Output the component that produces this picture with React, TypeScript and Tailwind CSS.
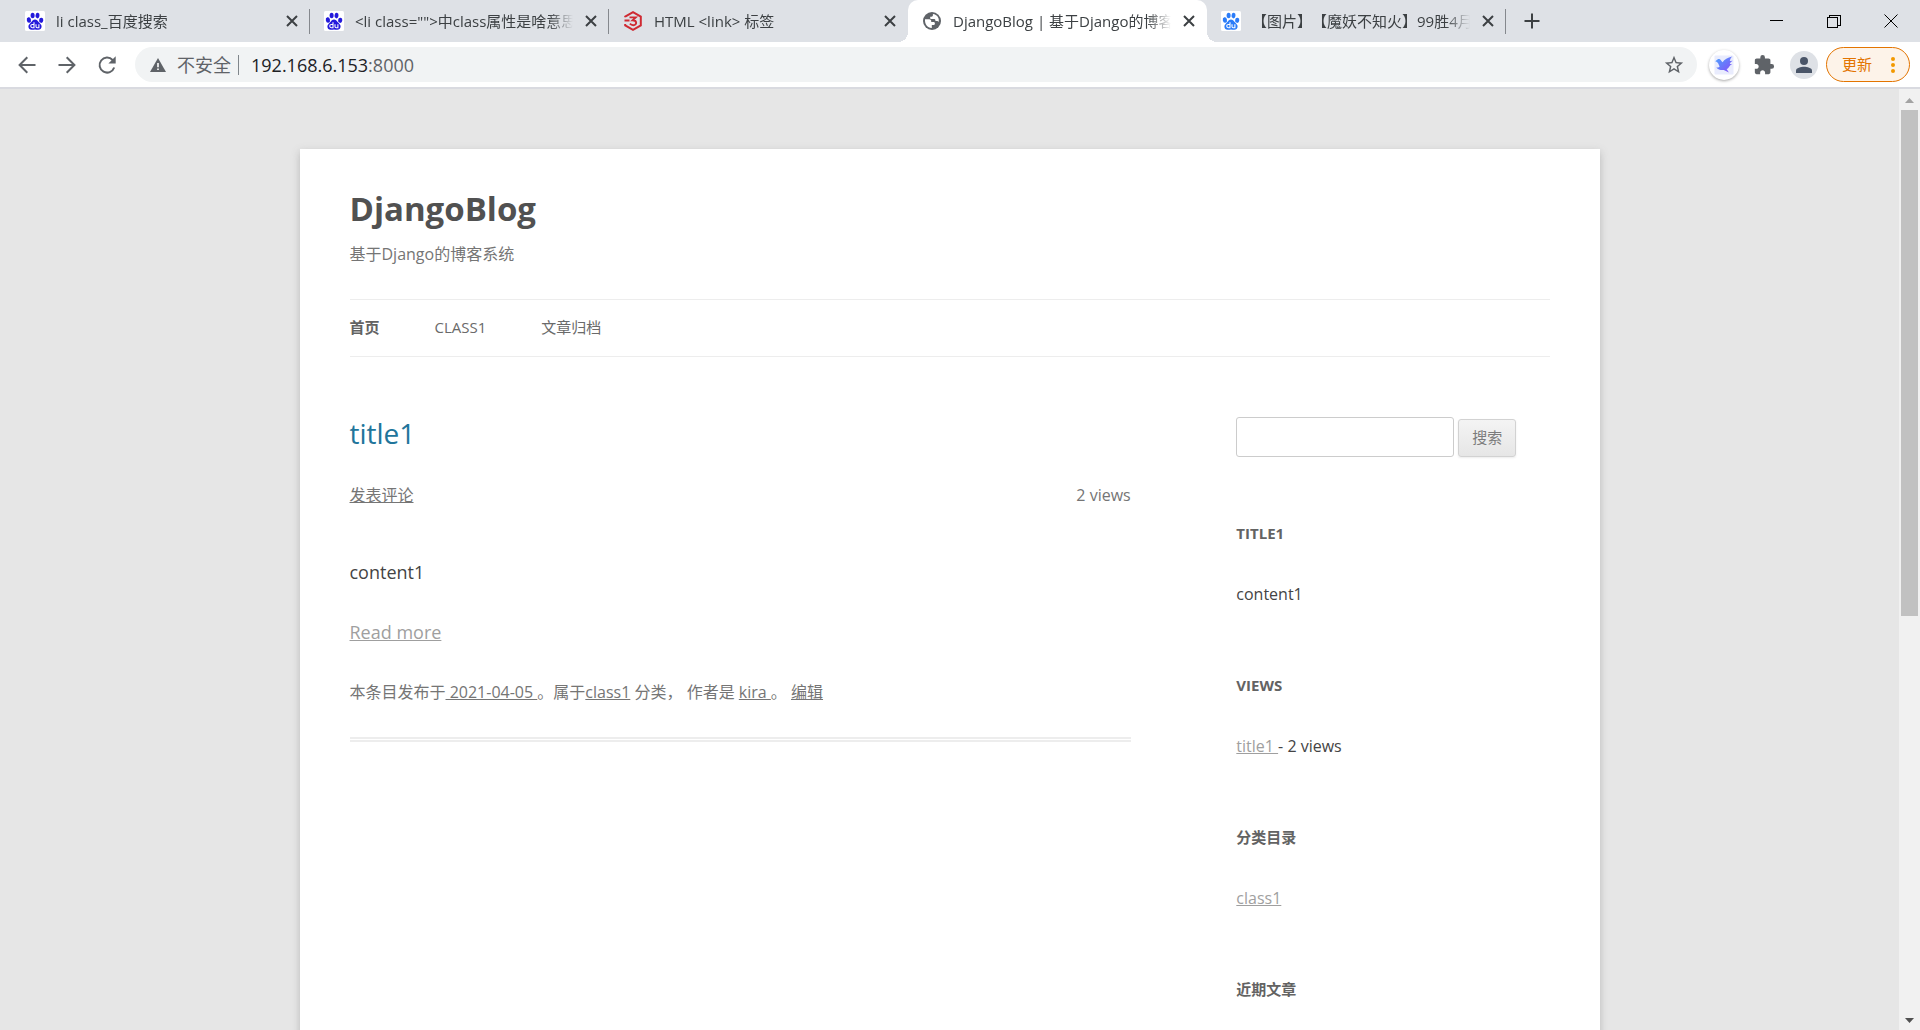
import type { ReactNode } from "react";

type IconProps = { className?: string };

function PawIcon({ color }: { color: string }) {
  return (
    <svg viewBox="0 0 20 20" className="size-5 shrink-0" aria-hidden="true">
      <rect width="20" height="20" rx="1.5" fill="#fff" />
      <g fill={color}>
        <ellipse cx="3.9" cy="9" rx="2.1" ry="2.7" transform="rotate(-12 3.9 9)" />
        <ellipse cx="7.6" cy="4.5" rx="2" ry="2.8" />
        <ellipse cx="12.5" cy="4.6" rx="2" ry="2.8" transform="rotate(10 12.5 4.6)" />
        <ellipse cx="16.2" cy="9.3" rx="2.1" ry="2.6" transform="rotate(8 16.2 9.3)" />
        <path d="M10 8.4c1.7 0 2.6 1.3 3.6 2.5 1.3 1.5 3.2 2.6 3 4.8-.2 2-1.7 3.1-3.6 3-1.2 0-2-.3-3-.3s-1.900.3-3.100.3c-2 .1-3.400-1-3.500-3-.1-2.200 1.700-3.300 3-4.800 1-1.200 1.900-2.500 3.600-2.500z" />
      </g>
      <g fill="none" stroke="#fff" strokeWidth="1.1">
        <path d="M9 11.300v5.400H7.300c-2.100 0-2.100-3.200 0-3.200H9" />
        <path d="M11 13.300v2.300c0 .8.400 1.100 1.100 1.100h1.800v-3.400" />
      </g>
    </svg>
  );
}

function HexIcon() {
  return (
    <svg viewBox="0 0 20 20" className="size-5 shrink-0" aria-hidden="true" fill="none" stroke="#cf2a33">
      <path d="M2.200 6.200V5.700L10 1.200l7.800 4.500v8.600L10 18.800l-7.800-4.500v-1.300" strokeWidth="2" />
      <path d="M1.500 9.500h5M6.500 6.400h6.200L9.600 9.200c4.800 0 4.400 5 .8 5-1.700 0-2.700-.6-3.500-1.500" strokeWidth="1.900" />
    </svg>
  );
}

function GlobeIcon() {
  return (
    <svg viewBox="0 0 20 20" className="size-5 shrink-0" aria-hidden="true">
      <circle cx="10" cy="10" r="9" fill="#5f6368" />
      <path
        d="M3 8.300h4.200c1.300 0 2 .8 2 1.800v1h2.200c1 0 1.500.6 1.500 1.400 0 1-.7 1.500-1.700 1.500H9.800v2.900C5.600 17 2.600 13.500 3 8.300z"
        fill="#fff"
      />
      <path
        d="M10.900 3v1.300c0 .9-.6 1.400-1.400 1.400H8.200v1.300c0 .7.400 1.100 1.100 1.100h2.600c1 0 1.500.6 1.500 1.400v.6h1.700c.8 0 1.300.400 1.500 1.100C17.700 7.300 15.200 3.500 10.900 3z"
        fill="#fff"
      />
    </svg>
  );
}

function CloseGlyph({ className }: IconProps) {
  return (
    <svg viewBox="0 0 12 12" className={className} aria-hidden="true" fill="none" stroke="#3c4043" strokeWidth="2">
      <path d="M1 1l10 10M11 1L1 11" />
    </svg>
  );
}

type TabProps = { icon: ReactNode; title: string; active?: boolean; divider?: boolean };

function Tab({ icon, title, active, divider }: TabProps) {
  return (
    <div
      className={
        active
          ? "relative flex h-full w-[299px] min-w-0 items-center rounded-t-[10px] bg-white pr-[12px] pl-[14px]"
          : "relative flex h-full w-[299px] min-w-0 items-center pr-[12px] pl-[14px]"
      }
    >
      {active && (
        <>
          <span className="absolute bottom-0 -left-[10px] size-[10px] bg-[radial-gradient(circle_at_0_0,transparent_10px,#fff_10px)]" />
          <span className="absolute bottom-0 -right-[10px] size-[10px] bg-[radial-gradient(circle_at_100%_0,transparent_10px,#fff_10px)]" />
        </>
      )}
      <button type="button" role="tab" aria-selected={!!active} className="flex min-w-0 flex-1 items-center gap-[11px]">
        {icon}
        <span className="flex-1 overflow-hidden text-left text-[15px] leading-5 whitespace-nowrap text-[#3c4043] [mask-image:linear-gradient(to_right,#000_calc(100%-24px),transparent)] [text-spacing-trim:space-all]">
          {title}
        </span>
      </button>
      <button type="button" aria-label={"关闭 " + title} className="flex h-5 w-6 items-center justify-end">
        <CloseGlyph className="size-3" />
      </button>
      {divider && <span className="absolute top-[9px] right-0 h-[25px] w-px bg-[#85888d]" />}
    </div>
  );
}

function TabStrip() {
  return (
    <div className="flex h-[42px] shrink-0 items-center bg-[#dee1e6] pl-[11px]">
      <div role="tablist" className="flex h-full">
        <Tab icon={<PawIcon color="#2319dc" />} title="li class_百度搜索" divider />
        <Tab icon={<PawIcon color="#2319dc" />} title={'<li class="">中class属性是啥意思'} divider />
        <Tab icon={<HexIcon />} title="HTML <link> 标签" />
        <Tab icon={<GlobeIcon />} title="DjangoBlog | 基于Django的博客系统" active />
        <Tab icon={<PawIcon color="#2b7cf8" />} title="【图片】【魔妖不知火】99胜4月" divider />
      </div>
      <button type="button" aria-label="新标签页" className="ml-4 grid size-5 place-items-center">
        <svg viewBox="0 0 16 16" className="size-4" fill="none" stroke="#3c4043" strokeWidth="2">
          <path d="M8 0.500v15M0.500 8h15" />
        </svg>
      </button>
      <div className="ml-auto flex h-9 items-center pr-px">
        <button type="button" aria-label="最小化" className="grid h-9 w-[57px] place-items-center">
          <svg viewBox="0 0 14 14" className="size-[14px]" stroke="#000" shapeRendering="crispEdges">
            <path d="M0 6.500h13" />
          </svg>
        </button>
        <button type="button" aria-label="还原" className="grid h-9 w-[57px] place-items-center">
          <svg viewBox="0 0 14 14" className="size-[14px]" fill="none" stroke="#000" shapeRendering="crispEdges">
            <path d="M0.500 3.500h10v10h-10zM2.500 3.500v-2h10.500v10h-2.500" />
          </svg>
        </button>
        <button type="button" aria-label="关闭" className="grid h-9 w-[57px] place-items-center">
          <svg viewBox="0 0 14 14" className="size-[14px]" fill="none" stroke="#000" strokeWidth="1">
            <path d="M0.500 0.500l13 13M13.500 0.500l-13 13" />
          </svg>
        </button>
      </div>
    </div>
  );
}

function Toolbar() {
  return (
    <div className="flex h-[47px] shrink-0 items-center border-b-2 border-[#d9dae0] bg-white pr-[10px] pl-[17px]">
      <button type="button" aria-label="后退" className="grid w-5 place-items-center">
        <svg viewBox="0 0 20 20" className="size-5" fill="none" stroke="#5f6368" strokeWidth="2">
          <path d="M18.500 10H3M10.300 2.300L2.600 10l7.700 7.700" />
        </svg>
      </button>
      <button type="button" aria-label="前进" className="ml-5 grid w-5 place-items-center">
        <svg viewBox="0 0 20 20" className="size-5" fill="none" stroke="#5f6368" strokeWidth="2">
          <path d="M1.500 10H17M9.700 2.300l7.700 7.700-7.700 7.700" />
        </svg>
      </button>
      <button type="button" aria-label="重新加载" className="ml-5 grid w-5 place-items-center">
        <svg viewBox="0 0 20 20" className="size-5" fill="none" stroke="#5f6368" strokeWidth="2">
          <path d="M17.200 12.500A7.500 7.500 0 1 1 15.600 5L17.500 7" />
          <path d="M18.700 1.300v7.300h-7.300z" fill="#5f6368" stroke="none" />
        </svg>
      </button>
      <div className="ml-[18px] flex h-[35px] flex-1 items-center rounded-full bg-[#f1f3f4] pr-3 pl-[15px]">
        <svg viewBox="0 0 16 16" className="size-4" aria-hidden="true">
          <path d="M8 1l8 14H0z" fill="#5f6368" />
          <path d="M7.200 6h1.600v4.200H7.200zM7.200 11.500h1.600v1.600H7.200z" fill="#fff" />
        </svg>
        <span className="ml-[11px] text-[18px] leading-6 text-[#5f6368]">不安全</span>
        <span className="ml-[7px] h-5 w-px bg-[#80868b]" />
        <a href="#" className="ml-3 flex-1 text-[18px] leading-6 text-[#202124]">
          192.168.6.153<span className="text-[#5f6368]">:8000</span>
        </a>
        <button type="button" aria-label="收藏">
          <svg viewBox="0 0 24 24" className="size-[22px]" fill="#5f6368">
            <path d="M22 9.240l-7.190-.620L12 2 9.190 8.630 2 9.240l5.460 4.730L5.820 21 12 17.270 18.180 21l-1.630-7.030L22 9.240zM12 15.400l-3.760 2.270 1-4.280-3.320-2.880 4.380-.380L12 6.100l1.710 4.040 4.380.380-3.320 2.880 1 4.280L12 15.400z" />
          </svg>
        </button>
      </div>
      <button type="button" aria-label="迅雷" className="ml-3 grid size-[30px] place-items-center rounded-full bg-white shadow-[0_1px_3px_rgba(0,0,0,0.35)]">
        <svg viewBox="0 0 20 20" className="size-5">
          <defs>
            <linearGradient id="wing" x1="0" y1="0" x2="1" y2="1">
              <stop offset="0" stopColor="#4aa3ff" />
              <stop offset="1" stopColor="#8a4bf5" />
            </linearGradient>
          </defs>
          <rect x="0.500" y="0.500" width="19" height="19" rx="1" fill="#e9ecfd" />
          <path
            d="M1.300 6.200l2.500-1.900c1.300-.5 2.600 0 3.600 1.600l1.200 1.300c1.800-2.600 5-4.700 9.600-5.600-1.400 1.600-2 2.600-2.400 4.300l3-.1c-1.700 1-2.600 1.900-3 3.200l2.400.3c-1.600.7-2.400 1.400-3 2.500-.7 1.300-1.400 1.900-2.600 2.300l2.300 3.400-5.100-2.500c-2.900.4-5.600-.3-7.500-2.500 1.900.2 2.700-.1 3.300-.9-.9-2.400-1.600-4.600-4.300-5.400z"
            fill="url(#wing)"
          />
        </svg>
      </button>
      <button type="button" aria-label="扩展程序" className="ml-[14px] grid w-5 place-items-center">
        <svg viewBox="0 0 24 24" className="size-[22px]" fill="#5f6368">
          <path d="M20.500 11H19V7c0-1.100-.9-2-2-2h-4V3.500a2.500 2.500 0 0 0-5 0V5H4c-1.100 0-1.990.9-1.990 2v3.800H3.500c1.490 0 2.700 1.210 2.700 2.700s-1.210 2.700-2.700 2.700H2V20c0 1.100.9 2 2 2h3.800v-1.500c0-1.490 1.210-2.700 2.700-2.700s2.700 1.210 2.700 2.700V22H17c1.100 0 2-.9 2-2v-4h1.500a2.500 2.500 0 0 0 0-5z" />
        </svg>
      </button>
      <button type="button" aria-label="个人资料" className="ml-[17px] grid size-7 place-items-center rounded-full bg-[#dee1e6]">
        <svg viewBox="0 0 16 16" className="size-4" fill="#4a5568">
          <circle cx="8" cy="4" r="4" />
          <path d="M0 16v-2.500C0 11 5 9.800 8 9.800s8 1.200 8 3.700V16z" />
        </svg>
      </button>
      <button
        type="button"
        className="ml-2 flex h-[35px] w-[84px] items-center justify-between rounded-full border border-[#e37400] bg-[#fdf3e9] pr-[14px] pl-[15px] text-[15px] text-[#e37400]"
      >
        更新
        <svg viewBox="0 0 4 16" className="h-4 w-1" fill="#f29900">
          <circle cx="2" cy="2" r="2" />
          <circle cx="2" cy="8" r="2" />
          <circle cx="2" cy="14" r="2" />
        </svg>
      </button>
    </div>
  );
}

function Scrollbar() {
  return (
    <div className="flex w-[21px] shrink-0 flex-col items-center bg-[#f1f1f1]" aria-hidden="true">
      <svg viewBox="0 0 21 21" className="size-[21px]">
        <path d="M6 14h9l-4.500-5z" fill="#a3a3a3" />
      </svg>
      <div className="flex w-[17px] flex-1 flex-col">
        <div className="h-[56.300%] bg-[#c1c1c1]" />
      </div>
      <svg viewBox="0 0 21 21" className="size-[21px]">
        <path d="M6 9h9l-4.500 5z" fill="#505050" />
      </svg>
    </div>
  );
}

function Widget({ title, children }: { title: string; children?: ReactNode }) {
  return (
    <section className="mb-[60px]">
      <h3 className="mb-[30px] text-[15px] leading-[30px] font-bold text-[#636363] uppercase">{title}</h3>
      <div className="text-[16px] leading-8 text-[#444]">{children}</div>
    </section>
  );
}

function BlogPage() {
  return (
    <div className="mx-auto mt-[60px] min-h-full max-w-[1300px] bg-white px-[50px] pt-[30px] font-['Open_Sans','Noto_Sans_CJK_SC',sans-serif] text-[#444] shadow-[0_3px_8px_rgba(100,100,100,0.35)]">
      <header>
        <h1 className="text-[33px] leading-[60px] font-bold text-[#515151]">
          <a href="#">DjangoBlog</a>
        </h1>
        <p className="text-[16px] leading-[30px] text-[#757575]">基于Django的博客系统</p>
        <nav className="mt-[30px] flex gap-[55px] border-y border-[#ededed] pb-0.5 text-[15px] leading-[54px] text-[#6a6a6a]">
          <a href="#" className="font-bold text-[#636363]">首页</a>
          <a href="#">CLASS1</a>
          <a href="#">文章归档</a>
        </nav>
      </header>
      <div className="flex justify-between pt-[60px]">
        <main className="w-[65.100%]">
          <article className="border-b-[5px] border-double border-[#ededed] pb-[30px]">
            <h2 className="text-[28px] leading-[33px] text-[#21759b]">
              <a href="#">title1</a>
            </h2>
            <div className="mt-[30px] flex justify-between text-[16px] leading-[30px] text-[#757575]">
              <a href="#" className="underline">发表评论</a>
              <span>2 views</span>
            </div>
            <p className="mt-[47px] text-[18px] leading-[30px]">content1</p>
            <p className="mt-[30px] text-[18px] leading-[30px] text-[#9f9f9f]">
              <a href="#" className="underline">Read more</a>
            </p>
            <footer className="mt-[30px] text-[16px] leading-[30px] whitespace-pre-wrap text-[#757575]">
              本条目发布于<a href="#" className="underline"> 2021-04-05 </a>。属于<a href="#" className="underline">class1</a>
              {" 分类， 作者是 "}
              <a href="#" className="underline">kira </a>
              {"。 "}
              <a href="#" className="underline">编辑</a>
            </footer>
          </article>
        </main>
        <aside className="w-[26.100%]">
          <form className="mb-[61px] flex items-end gap-1" onSubmit={(e) => e.preventDefault()}>
            <input
              type="text"
              aria-label="搜索"
              className="h-10 w-[218px] rounded-[3px] border border-[#ccc] px-2 text-[15px] outline-none"
            />
            <button
              type="submit"
              className="h-[38px] w-[58px] rounded-[3px] border border-[#d2d2d2] bg-gradient-to-b from-[#f4f4f4] to-[#e6e6e6] pb-0.5 text-[15px] text-[#7c7c7c] shadow-[0_1px_2px_rgba(64,64,64,0.1)]"
            >
              搜索
            </button>
          </form>
          <Widget title="title1">content1</Widget>
          <Widget title="views">
            <a href="#" className="whitespace-pre text-[#9f9f9f] underline">{"title1 "}</a>- 2 views
          </Widget>
          <Widget title="分类目录">
            <a href="#" className="text-[#9f9f9f] underline">class1</a>
          </Widget>
          <Widget title="近期文章" />
        </aside>
      </div>
    </div>
  );
}

export default function App() {
  return (
    <div className="flex h-screen flex-col overflow-hidden font-['Open_Sans','Noto_Sans_CJK_SC',sans-serif]">
      <TabStrip />
      <Toolbar />
      <div className="flex min-h-0 flex-1 bg-[#e6e6e6]">
        <div className="min-w-0 flex-1 overflow-hidden">
          <BlogPage />
        </div>
        <Scrollbar />
      </div>
    </div>
  );
}
